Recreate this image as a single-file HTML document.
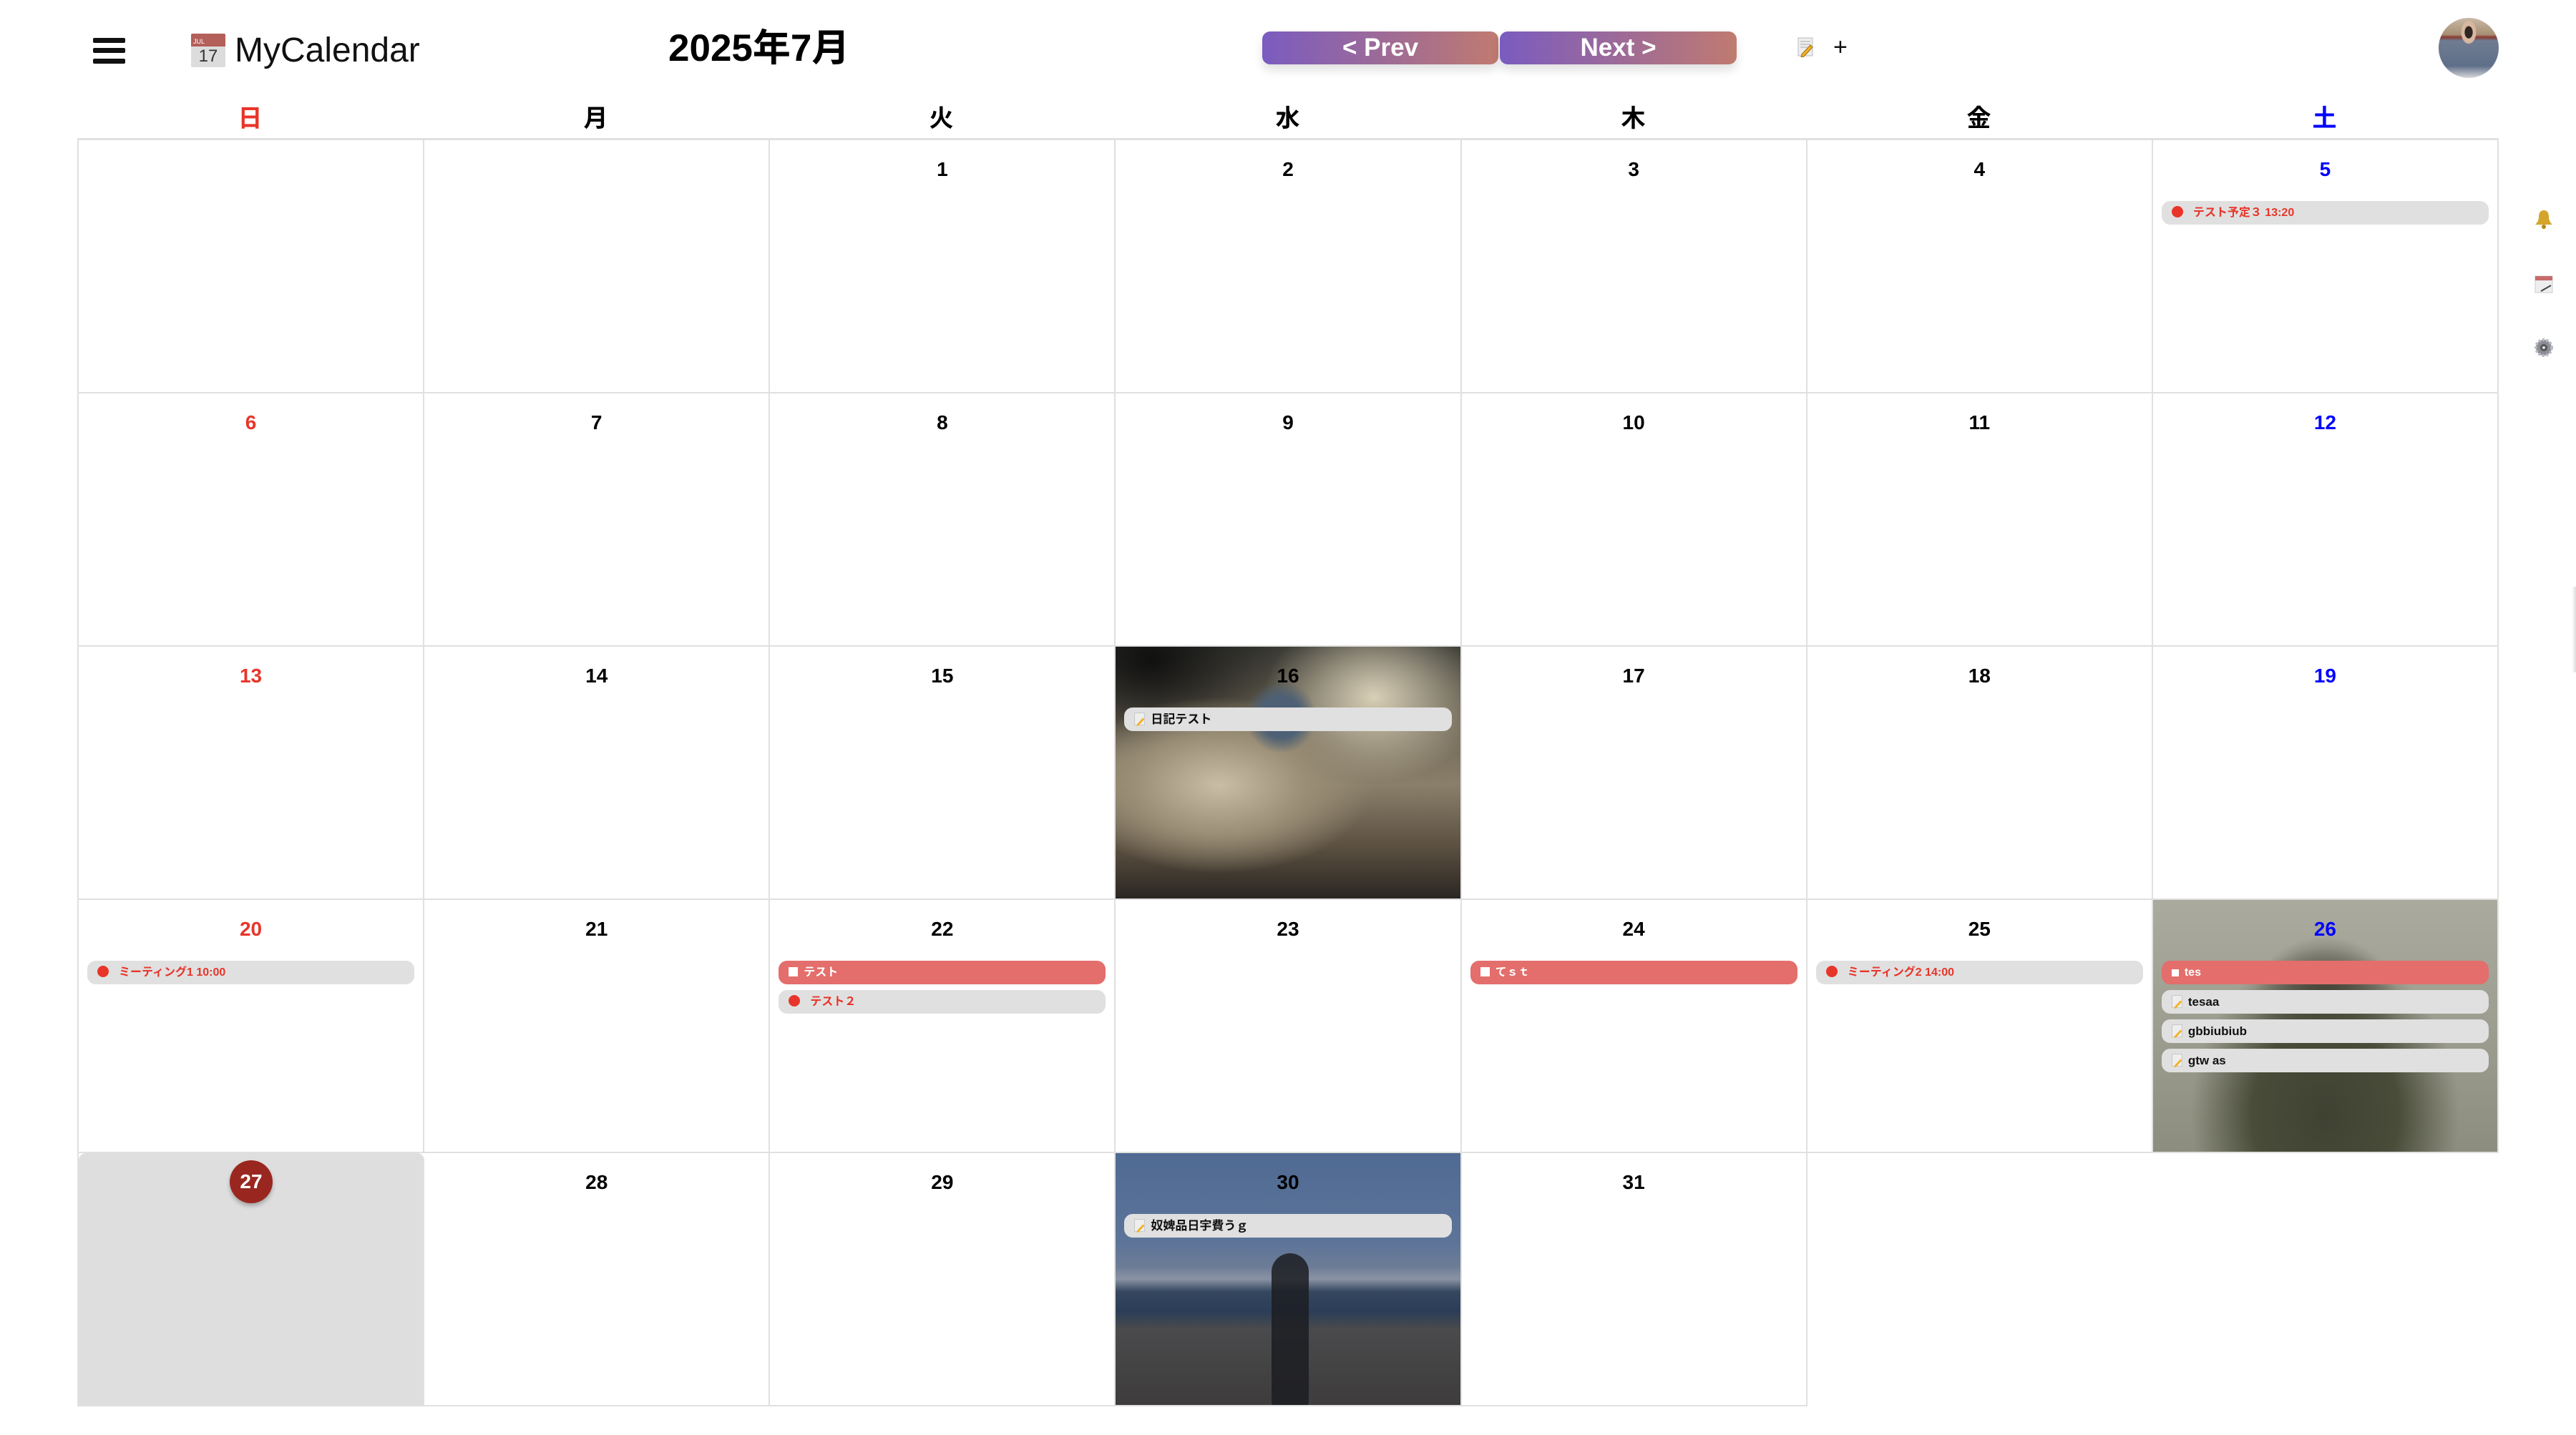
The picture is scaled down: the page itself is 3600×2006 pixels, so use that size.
<!DOCTYPE html>
<html><head><meta charset="utf-8"><style>
*{box-sizing:border-box;margin:0;padding:0}
body{width:3600px;height:2006px;background:#fff;position:relative;overflow:hidden;font-family:"Liberation Sans","Noto Sans CJK JP",sans-serif;}
.abs{position:absolute}
.ham{left:130px;top:53px;width:45px;height:36px}
.ham div{position:absolute;left:0;width:45px;height:7px;background:#111;border-radius:2px}
.btn{position:absolute;top:44px;height:46px;border-radius:11px;background:linear-gradient(90deg,#7a5bc0,#c07a70);color:#fff;font-weight:bold;font-size:35px;text-align:center;line-height:46px;box-shadow:0 8px 14px rgba(0,0,0,.12)}
.wk{position:absolute;top:142px;width:483px;text-align:center;font-size:34px;font-weight:bold;line-height:48px}
#grid{position:absolute;left:108px;top:193px;width:3384px;border-top:3px solid #e0e0e0;border-left:2px solid #e0e0e0;display:grid;grid-template-columns:repeat(7,1fr);grid-auto-rows:354px}
.c{border-right:2px solid #e0e0e0;border-bottom:2px solid #e0e0e0;position:relative;overflow:hidden}
.c.nb{border:none}
.n{position:absolute;top:26px;left:0;right:0;text-align:center;font-size:28px;font-weight:bold;line-height:30px;color:#000}
.red{color:#e8352a}.blue{color:#0000ff}
.ev{position:absolute;left:12px;right:12px;height:33px;border-radius:12px;background:#e0e0e0;font-size:16px;font-weight:bold;line-height:33px;padding-left:14px;white-space:nowrap}
.ev.r{color:#e8352a}
.ev.r .dot{display:inline-block;width:16px;height:16px;border-radius:50%;background:#e8352a;vertical-align:-2px;margin-right:14px}
.ev.f{background:#e36e6b;color:#fff}
.ev.f .sq{display:inline-block;width:13px;height:13px;background:#fff;vertical-align:-1px;margin-right:8px}
.ev.d{color:#111;font-size:17px}
.memo{display:inline-block;width:17px;height:19px;vertical-align:-4px;margin-right:6px}
</style></head><body>
<div class="abs ham"><div style="top:0"></div><div style="top:14px"></div><div style="top:29px"></div></div>
<div class="abs" style="left:267px;top:47px;width:48px;height:47px;background:#dcdcdc;border-radius:2px;overflow:hidden">
<div style="height:18px;background:#b45f5a;color:#fff;font-size:9px;line-height:22px;padding-left:3px">JUL</div>
<div style="text-align:center;font-size:24px;line-height:28px;color:#333">17</div></div>
<div class="abs" style="left:328px;top:39px;font-size:48px;line-height:64px;color:#111">MyCalendar</div>
<div class="abs" style="left:934px;top:36px;font-size:53px;font-weight:bold;line-height:64px;color:#000">2025年7月</div>
<div class="btn" style="left:1764px;width:330px">&lt; Prev</div>
<div class="btn" style="left:2096px;width:331px">Next &gt;</div>
<svg class="abs" style="left:2512px;top:52px" width="25" height="28" viewBox="0 0 25 28"><rect x="1" y="1" width="20" height="25" fill="#eee" stroke="#bbb"/><path d="M4 6h14M4 10h14M4 14h10" stroke="#aaa"/><path d="M6 24l12-13 3 3-12 13-4 1z" fill="#f2b125" stroke="#a06a10"/></svg>
<div class="abs" style="left:2562px;top:44px;font-size:34px;line-height:44px;color:#111">+</div>
<div class="abs" style="left:3408px;top:25px;width:84px;height:84px;border-radius:50%;background:radial-gradient(ellipse at 50% 24%,#2f2622 0 9%,#d8b8a0 10% 17%,transparent 18%),linear-gradient(180deg,#c9b9a5 0%,#a78f74 28%,#8a3a30 32%,#6f7c92 38%,#5f6f89 80%,#d8d8dc 100%)"></div>
<svg class="abs" style="left:3541px;top:292px" width="28" height="28" viewBox="0 0 28 28"><path d="M14 2c-5 0-7 4-7 9 0 5-2 8-5 11h24c-3-3-5-6-5-11 0-5-2-9-7-9z" fill="#d4a52a"/><circle cx="14" cy="25" r="3" fill="#b8861a"/></svg>
<svg class="abs" style="left:3541px;top:383px" width="28" height="28" viewBox="0 0 28 28"><rect x="2" y="3" width="24" height="23" fill="#eee" stroke="#ccc"/><rect x="2" y="3" width="24" height="6" fill="#c86a6a"/><path d="M10 24l14-8" stroke="#444" stroke-width="2"/></svg>
<svg class="abs" style="left:3541px;top:472px" width="28" height="28" viewBox="0 0 28 28"><circle cx="14" cy="14" r="11" fill="#8a8d93" stroke="#b8bac0" stroke-width="4" stroke-dasharray="3 2.5"/><circle cx="14" cy="14" r="5" fill="#555"/><circle cx="14" cy="14" r="2" fill="#ddd"/></svg>
<div class="abs" style="left:3594px;top:820px;width:6px;height:120px;background:linear-gradient(90deg,#fff,#ddd)"></div>

<div class="wk red" style="left:108px">日</div>
<div class="wk" style="left:591px">月</div>
<div class="wk" style="left:1074px">火</div>
<div class="wk" style="left:1558px">水</div>
<div class="wk" style="left:2041px">木</div>
<div class="wk" style="left:2524px">金</div>
<div class="wk blue" style="left:3007px">土</div>

<div id="grid">
<div class="c"></div><div class="c"></div>
<div class="c"><div class="n">1</div></div>
<div class="c"><div class="n">2</div></div>
<div class="c"><div class="n">3</div></div>
<div class="c"><div class="n">4</div></div>
<div class="c"><div class="n blue">5</div><div class="ev r" style="top:85px"><span class="dot"></span>テスト予定３ 13:20</div></div>

<div class="c"><div class="n red">6</div></div>
<div class="c"><div class="n">7</div></div>
<div class="c"><div class="n">8</div></div>
<div class="c"><div class="n">9</div></div>
<div class="c"><div class="n">10</div></div>
<div class="c"><div class="n">11</div></div>
<div class="c"><div class="n blue">12</div></div>

<div class="c"><div class="n red">13</div></div>
<div class="c"><div class="n">14</div></div>
<div class="c"><div class="n">15</div></div>
<div class="c" style="background:radial-gradient(ellipse at 48% 28%,#4d6075 0%,#4d6075 8%,transparent 14%),radial-gradient(ellipse at 30% 55%,#c9bea5 0%,#9a8e76 25%,transparent 45%),radial-gradient(ellipse at 75% 20%,#d8cfb6 0%,transparent 30%),radial-gradient(ellipse at 10% 5%,#101010 0%,transparent 30%),linear-gradient(180deg,#3a3a34 0%,#6b6454 30%,#8a7f6a 55%,#5a4f40 80%,#2a2622 100%)"><div class="n">16</div><div class="ev d" style="top:85px"><svg class="memo" viewBox="0 0 25 28"><rect x="1" y="1" width="20" height="25" fill="#eee" stroke="#bbb"/><path d="M6 24l12-13 3 3-12 13-4 1z" fill="#f2b125"/></svg>日記テスト</div></div>
<div class="c"><div class="n">17</div></div>
<div class="c"><div class="n">18</div></div>
<div class="c"><div class="n blue">19</div></div>

<div class="c"><div class="n red">20</div><div class="ev r" style="top:85px"><span class="dot"></span>ミーティング1 10:00</div></div>
<div class="c"><div class="n">21</div></div>
<div class="c"><div class="n">22</div><div class="ev f" style="top:85px"><span class="sq"></span>テスト</div><div class="ev r" style="top:126px"><span class="dot"></span>テスト２</div></div>
<div class="c"><div class="n">23</div></div>
<div class="c"><div class="n">24</div><div class="ev f" style="top:85px"><span class="sq"></span>てｓｔ</div></div>
<div class="c"><div class="n">25</div><div class="ev r" style="top:85px"><span class="dot"></span>ミーティング2 14:00</div></div>
<div class="c" style="background:radial-gradient(ellipse at 50% 85%,#3f4232 0%,#4a4c3a 30%,transparent 55%),radial-gradient(ellipse at 50% 40%,#2e2a26 0%,transparent 30%),linear-gradient(180deg,#aaaa9e 0%,#9d9e90 50%,#8c8d7e 100%)"><div class="n blue">26</div><div class="ev f" style="top:85px"><span class="sq" style="width:10px;height:10px"></span>tes</div><div class="ev d" style="top:126px"><svg class="memo" viewBox="0 0 25 28"><rect x="1" y="1" width="20" height="25" fill="#eee" stroke="#bbb"/><path d="M6 24l12-13 3 3-12 13-4 1z" fill="#f2b125"/></svg>tesaa</div><div class="ev d" style="top:167px"><svg class="memo" viewBox="0 0 25 28"><rect x="1" y="1" width="20" height="25" fill="#eee" stroke="#bbb"/><path d="M6 24l12-13 3 3-12 13-4 1z" fill="#f2b125"/></svg>gbbiubiub</div><div class="ev d" style="top:208px"><svg class="memo" viewBox="0 0 25 28"><rect x="1" y="1" width="20" height="25" fill="#eee" stroke="#bbb"/><path d="M6 24l12-13 3 3-12 13-4 1z" fill="#f2b125"/></svg>gtw as</div></div>

<div class="c" style="background:#dedede;border-radius:10px 10px 0 0"><div class="abs" style="left:211px;top:10px;width:60px;height:60px;border-radius:50%;background:#992720;color:#fff;font-size:28px;font-weight:bold;text-align:center;line-height:60px;box-shadow:0 4px 6px rgba(0,0,0,.25)">27</div></div>
<div class="c"><div class="n">28</div></div>
<div class="c"><div class="n">29</div></div>
<div class="c" style="background:linear-gradient(180deg,#4f6a93 0%,#5d7499 35%,#6b7c96 45%,#8a93a4 50%,#34475f 55%,#2c3e57 63%,#4a4a4c 70%,#3e3c3c 100%)"><div class="abs" style="left:218px;top:140px;width:52px;height:214px;background:#1c1d22;border-radius:26px 26px 6px 6px;opacity:.85"></div><div class="n">30</div><div class="ev d" style="top:85px"><svg class="memo" viewBox="0 0 25 28"><rect x="1" y="1" width="20" height="25" fill="#eee" stroke="#bbb"/><path d="M6 24l12-13 3 3-12 13-4 1z" fill="#f2b125"/></svg>奴婢品日宇費うｇ</div></div>
<div class="c"><div class="n">31</div></div>
<div class="c nb"></div><div class="c nb"></div>
</div>
</body></html>
